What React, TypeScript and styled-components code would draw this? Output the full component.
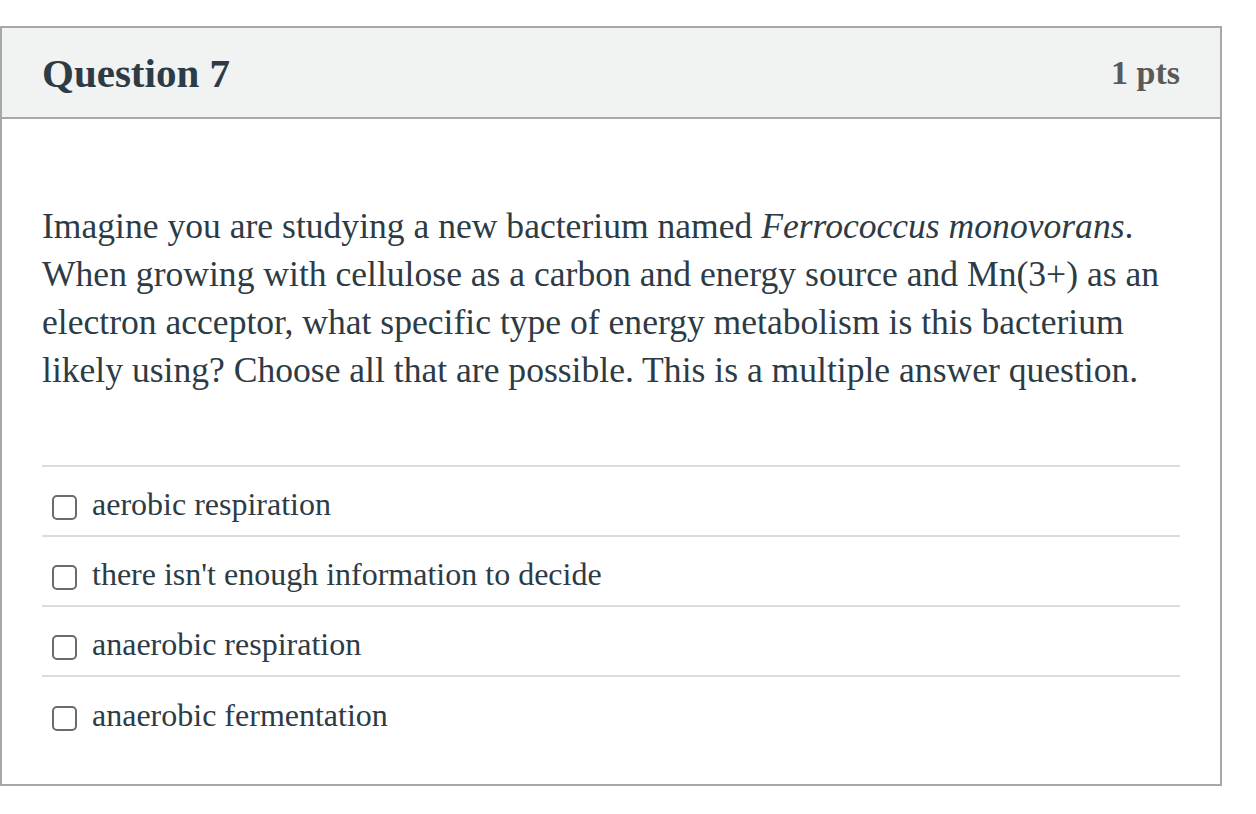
import React from "react";
import styled, { createGlobalStyle } from "styled-components";

const GlobalStyle = createGlobalStyle`
  body {
    margin: 0;
    background: #ffffff;
    font-family: "Liberation Serif", "Times New Roman", serif;
    color: #2d3b45;
  }
`;

const answers = [
  "aerobic respiration",
  "there isn't enough information to decide",
  "anaerobic respiration",
  "anaerobic fermentation",
];

export default function App() {
  return (
    <>
      <GlobalStyle />
      <Page>
        <Card>
          <Header>
            <Title>Question 7</Title>
            <Points>1 pts</Points>
          </Header>
          <Body>
            <Prompt>
              Imagine you are studying a new bacterium named <em>Ferrococcus monovorans</em>. When growing
              with cellulose as a carbon and energy source and Mn(3+) as an electron acceptor, what specific
              type of energy metabolism is this bacterium likely using? Choose all that are possible. This is
              a multiple answer question.
            </Prompt>
            <AnswerList>
              {answers.map((a) => (
                <AnswerRow key={a}>
                  <Box type="checkbox" />
                  <AnswerText>{a}</AnswerText>
                </AnswerRow>
              ))}
            </AnswerList>
          </Body>
        </Card>
      </Page>
    </>
  );
}

const Page = styled.div`
  padding-top: 26px;
  width: 1222px;
`;

const Card = styled.div`
  border: 2px solid #a8a8a8;
  background: #fff;
`;

const Header = styled.div`
  display: flex;
  align-items: center;
  justify-content: space-between;
  height: 89px;
  padding: 0 40px;
  background: #f1f2f2;
  border-bottom: 2px solid #a8a8a8;
`;

const Title = styled.h2`
  margin: 0;
  font-size: 41px;
  font-weight: 700;
  color: #2d3b45;
`;

const Points = styled.div`
  font-size: 34px;
  font-weight: 700;
  color: #595959;
`;

const Body = styled.div`
  padding: 83px 40px 37px;
`;

const Prompt = styled.p`
  margin: 0 -30px 71px 0;
  font-size: 35.6px;
  line-height: 48px;
  color: #2d3b45;
`;

const AnswerList = styled.div`
  border-top: 2px solid #dcdcdc;
`;

const AnswerRow = styled.label`
  box-sizing: border-box;
  display: flex;
  align-items: center;
  height: 70px;
  padding: 6px 0 0 10px;
  border-bottom: 2px solid #dcdcdc;
  &:last-child {
    border-bottom: none;
  }
`;

const Box = styled.input`
  appearance: none;
  margin: 6px 15px 0 0;
  width: 25px;
  height: 25px;
  border: 2px solid #6b6b6b;
  border-radius: 5px;
  background: #fff;
  flex-shrink: 0;
`;

const AnswerText = styled.span`
  font-size: 32px;
  color: #2d3b45;
`;
